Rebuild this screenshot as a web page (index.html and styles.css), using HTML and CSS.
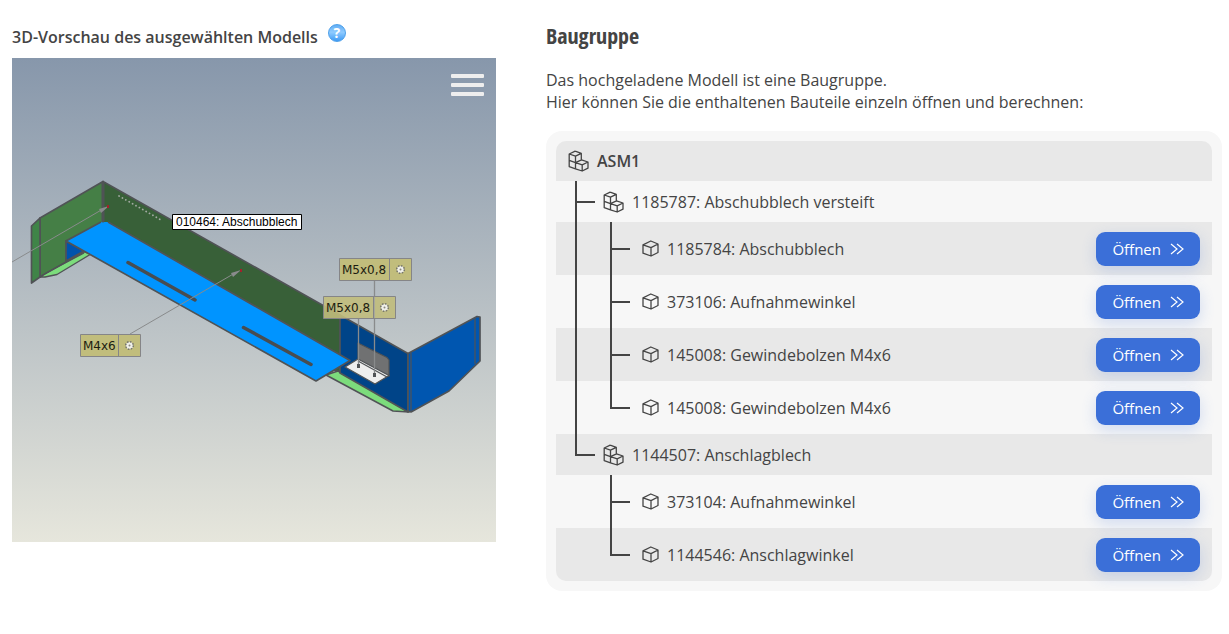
FILE: index.html
```html
<!DOCTYPE html>
<html lang="de">
<head>
<meta charset="utf-8">
<title>Baugruppe</title>
<link rel="stylesheet" href="styles.css">
</head>
<body>
<svg class="defs" width="0" height="0" aria-hidden="true">
  <symbol id="cube" viewBox="0 0 17 17">
    <path d="M8.8 1 16 4V12.5L9 16 1 13.200V4.800ZM1 4.800 9 7.600 16 4M9 7.600V16"/>
  </symbol>
  <symbol id="assembly" viewBox="0 0 21 22">
    <path d="M7.200 1.200 13.300 3.400V9.200M7.200 1.200 1.200 4V16.600L7.500 18.800M1.200 4 7.500 6.200 13.300 3.400M7.500 6.200V18.800M1.200 10.400 7.500 12.600M7.500 12.600 13.500 9.800 20 12V18.200L14.200 21 7.500 18.800M7.500 12.600 14.200 14.800 20 12M14.200 14.800V21"/>
  </symbol>
  <symbol id="chevrons" viewBox="0 0 14 12">
    <path d="M1 1 7 6 1 11M7 1 13 6 7 11"/>
  </symbol>
</svg>
<main class="page">
  <section class="preview">
    <header class="preview-head">
      <h2 class="preview-title">3D-Vorschau des ausgewählten Modells</h2>
      <button class="help" type="button" aria-label="Hilfe">?</button>
    </header>
    <div class="viewer">
      <svg class="model" viewBox="12 58 484 484" role="img" aria-label="3D-Modell">
        <g stroke="#505356" stroke-width="1.7" stroke-linejoin="round">
          <path fill="#457f46" d="M40 218 103 181.500V223L66 241V262L40 277Z"/>
          <path fill="#3f8448" d="M31.500 226 40 218V277L31.500 283Z"/>
          <path fill="#386038" d="M103 181.500 340 315V373L103 240Z"/>
          <path fill="#7cdc7c" stroke-width="1.300" d="M40 277 84 252 91 254 57 274.500 45 277Z"/>
          <path fill="none" stroke-width="1.300" d="M40 277 46 273 84 253"/>
          <path fill="#0053ad" d="M66 241V261L84 251Z"/>
          <path fill="#7cdc7c" stroke-width="1.500" d="M326 375 338 371 409 412 393 411Z"/>
          <path fill="#004488" d="M340 315 408 353.500V412L340 373Z"/>
          <path fill="#0056b0" d="M408 353.500 477 316.500 480 317V361L449 391 411 412 408 411Z"/>
          <path fill="none" stroke-width="1.200" d="M411 353V411M475 318V364"/>
          <path fill="#707172" stroke-width="1.200" d="M358 343 387 357.500 389 360V376L358 360Z"/>
          <path fill="#eeeeee" stroke-width="1.300" d="M345 367 358 359 389 375.500 375 384Z"/>
          <path fill="none" stroke-width="1.200" d="M358 361 387 377"/>
          <path fill="#0094ff" stroke="none" d="M66 241 101 222H108L350 360.500 316 381Z"/>
          <path fill="none" d="M108 222 350 360.500 316 381 66 241 101 222"/>
        </g>
        <g fill="none" stroke="#484d51" stroke-linecap="round">
          <path stroke-width="3.500" d="M128 262.500 195 300M243.500 327.500 311 364.500"/>
          <path stroke="#a3aaa3" stroke-width="1.800" stroke-dasharray=".1 3.800" d="M119 196 162 220.500"/>
          <path stroke="#505356" stroke-width="3" d="M103 183V221"/>
        </g>
        <g fill="#898b8c" stroke="#898b8c">
          <path fill="none" d="M12 262 103 209M130 334 235 273"/>
          <path stroke="none" d="M109 206 99 209 101 213ZM241 270 231 273 233 277Z"/>
        </g>
        <path fill="#a3202c" d="M107 205h2v3h-2zM240 269h2v3h-2z"/>
        <g class="tag">
          <path fill="#c1bd7c" stroke="#858587" d="M80.500 334.500H140.500V356.500H80.500ZM118.500 334.500V356.500"/>
          <text x="83" y="350">M4x6</text>
          <use href="#gear" x="129.500" y="345.500"/>
        </g>
        <path stroke="#898b8c" stroke-width="1.300" d="M358.500 318V366M374.500 280V374"/>
        <path fill="#505356" d="M357 364h3v4h-3zM373 373h3v4h-3z"/>
        <g class="tag">
          <path fill="#c1bd7c" stroke="#858587" fill-opacity=".9" d="M323.500 296.500H395.500V318.500H323.500ZM373.500 296.500V318.500"/>
          <path stroke="#a9a99a" d="M374.500 297V318"/>
          <text x="326" y="312">M5x0,8</text>
          <use href="#gear" x="384.500" y="307.500"/>
          <path fill="#c1bd7c" stroke="#858587" d="M339.500 258.500H411.500V280.500H339.500ZM389.500 258.500V280.500"/>
          <text x="342" y="274">M5x0,8</text>
          <use href="#gear" x="400.500" y="269.500"/>
        </g>
        <defs>
          <g id="gear">
            <circle r="3.500" fill="#eee" stroke="#77776c" stroke-width="2.200" stroke-dasharray="1.400 1.350"/>
            <circle r="3" fill="#f0f0eb"/>
            <circle r="1" fill="#88887c"/>
          </g>
        </defs>
        <path fill="#fff" stroke="#000" d="M172.500 214.500H301.500V229.500H172.500Z"/>
        <text class="tip" x="176" y="226">010464: Abschubblech</text>
      </svg>
      <button class="menu" type="button" aria-label="Menü"><span></span><span></span><span></span></button>
    </div>
  </section>

  <section class="assembly">
    <h1 class="title">Baugruppe</h1>
    <p class="intro">Das hochgeladene Modell ist eine Baugruppe.<br>Hier können Sie die enthaltenen Bauteile einzeln öffnen und berechnen:</p>
    <div class="panel">
      <ul class="tree">
        <li class="row root"><svg class="icon big"><use href="#assembly"/></svg><span class="name">ASM1</span></li>
        <li class="row group"><i class="guide tee"></i><svg class="icon big"><use href="#assembly"/></svg><span class="name">1185787: Abschubblech versteift</span></li>
        <li class="row part"><i class="guide pass"></i><i class="guide tee"></i><svg class="icon small"><use href="#cube"/></svg><span class="name">1185784: Abschubblech</span><button class="open" type="button">Öffnen<svg class="chev"><use href="#chevrons"/></svg></button></li>
        <li class="row part"><i class="guide pass"></i><i class="guide tee"></i><svg class="icon small"><use href="#cube"/></svg><span class="name">373106: Aufnahmewinkel</span><button class="open" type="button">Öffnen<svg class="chev"><use href="#chevrons"/></svg></button></li>
        <li class="row part"><i class="guide pass"></i><i class="guide tee"></i><svg class="icon small"><use href="#cube"/></svg><span class="name">145008: Gewindebolzen M4x6</span><button class="open" type="button">Öffnen<svg class="chev"><use href="#chevrons"/></svg></button></li>
        <li class="row part"><i class="guide pass"></i><i class="guide end"></i><svg class="icon small"><use href="#cube"/></svg><span class="name">145008: Gewindebolzen M4x6</span><button class="open" type="button">Öffnen<svg class="chev"><use href="#chevrons"/></svg></button></li>
        <li class="row group"><i class="guide end"></i><svg class="icon big"><use href="#assembly"/></svg><span class="name">1144507: Anschlagblech</span></li>
        <li class="row part"><i class="guide blank"></i><i class="guide tee"></i><svg class="icon small"><use href="#cube"/></svg><span class="name">373104: Aufnahmewinkel</span><button class="open" type="button">Öffnen<svg class="chev"><use href="#chevrons"/></svg></button></li>
        <li class="row part"><i class="guide blank"></i><i class="guide end"></i><svg class="icon small"><use href="#cube"/></svg><span class="name">1144546: Anschlagwinkel</span><button class="open" type="button">Öffnen<svg class="chev"><use href="#chevrons"/></svg></button></li>
      </ul>
    </div>
  </section>
</main>
</body>
</html>
```
FILE: styles.css
```css
* { box-sizing: border-box; }

body {
  margin: 0;
  background: #fff;
  color: #444;
  font: 16px/22px "Open Sans", "Noto Sans", sans-serif;
}

button { border: 0; padding: 0; font: inherit; cursor: pointer; }

.defs { position: absolute; }

.page {
  display: grid;
  grid-template-columns: 121fr 169fr;
  gap: 50px;
  align-items: start;
  padding: 22px 7px 22px 12px;
}

.preview-head {
  display: flex;
  align-items: flex-start;
  gap: 10px;
  height: 36px;
}

.preview-title {
  margin: 0;
  padding-top: 4px;
  font-size: 16px;
  line-height: 22px;
  font-weight: 600;
}

.help {
  width: 18px;
  height: 18px;
  margin-top: 2px;
  border-radius: 50%;
  border: 1px solid #4da0ea;
  background: linear-gradient(#62aef5, #8fcbff 45%, #3f9bf5);
  color: #fff;
  font-size: 14px;
  line-height: 16px;
  font-weight: 700;
}

.viewer {
  position: relative;
  aspect-ratio: 1;
  background: linear-gradient(#8797ab, #e6e6dc);
}

.model { display: block; width: 100%; height: 100%; }
.tag text { font: 12px "DejaVu Sans", sans-serif; fill: #1c1c10; }
.tip { font: 12px "Liberation Sans", Arial, sans-serif; fill: #000; }

.menu {
  position: absolute;
  top: 16px;
  right: 12px;
  display: flex;
  flex-direction: column;
  gap: 5px;
  width: 33px;
  background: none;
}

.menu span { height: 4px; border-radius: 1px; background: #eee; }

.title {
  margin: 0;
  font: 700 22px/26px "Open Sans Condensed", "Liberation Sans Narrow", sans-serif;
}

.intro { margin: 21px 0 18px; }

.panel { padding: 10px; border-radius: 16px; background: #f7f7f7; }

.tree {
  margin: 0;
  padding: 0;
  list-style: none;
  border-radius: 10px;
  background: #f7f7f7;
}

.row {
  display: flex;
  align-items: center;
  gap: 8px;
  min-height: 41px;
  padding: 0 12px 0 19px;
}

.row:nth-child(odd) { background: #e8e8e8; }
.row:first-child { border-radius: 10px 10px 0 0; }
.row:last-child { border-radius: 0 0 10px 10px; }
.root { min-height: 40px; padding-left: 12px; font-weight: 600; }
.part { min-height: 53px; }

.guide {
  align-self: stretch;
  flex: none;
  width: 20px;
  background: linear-gradient(#444, #444) 0 0 / 2px 100% no-repeat;
}

.pass, .blank { width: 27px; }
.blank { background: none; }

.tee, .end {
  background:
    linear-gradient(#444, #444) 0 0 / 2px 100% no-repeat,
    linear-gradient(#444, #444) 0 50% / 100% 2px no-repeat;
}

.end { background-size: 2px 50%, 100% 2px; }

.icon { flex: none; fill: none; stroke: #444; stroke-width: 1.3; stroke-linejoin: round; }
.big { width: 21px; height: 22px; }
.small { width: 17px; height: 17px; margin-left: 4px; }
.name { flex: 1; }

.open {
  display: flex;
  align-items: center;
  gap: 9px;
  height: 34px;
  padding: 0 16px;
  border-radius: 9px;
  background: #3b6fd8;
  color: #fff;
  font-size: 15px;
  box-shadow: 0 5px 15px rgba(59, 111, 216, 0.2);
}

.chev { width: 14px; height: 12px; fill: none; stroke: #fff; stroke-width: 1.2; }
```
